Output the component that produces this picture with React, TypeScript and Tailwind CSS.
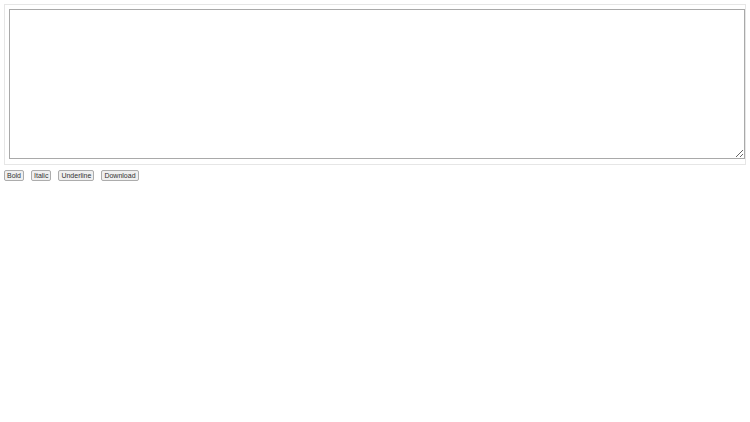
export default function App() {
  return (
    <div className="w-[750px] h-[422px] bg-white font-['Liberation_Sans',Arial,sans-serif]">
      <div className="ml-[4px] pt-[4px] w-[742px]">
        <div className="border border-[#e6e6e6] px-[4px] pt-[4px] pb-[5px]">
          <textarea className="block w-[736px] h-[150px] border border-[#a9a9a9] resize" />
        </div>
      </div>
      <div className="ml-[4px] mt-[5px] flex gap-[7px]">
        {['Bold', 'Italic', 'Underline', 'Download'].map((label) => (
          <button
            key={label}
            type="button"
            className="h-[11px] px-[2px] text-[7px] leading-[9px] font-normal text-[#333] bg-[#efefef] border border-[#acacac] rounded-[2px]"
          >
            {label}
          </button>
        ))}
      </div>
    </div>
  )
}
